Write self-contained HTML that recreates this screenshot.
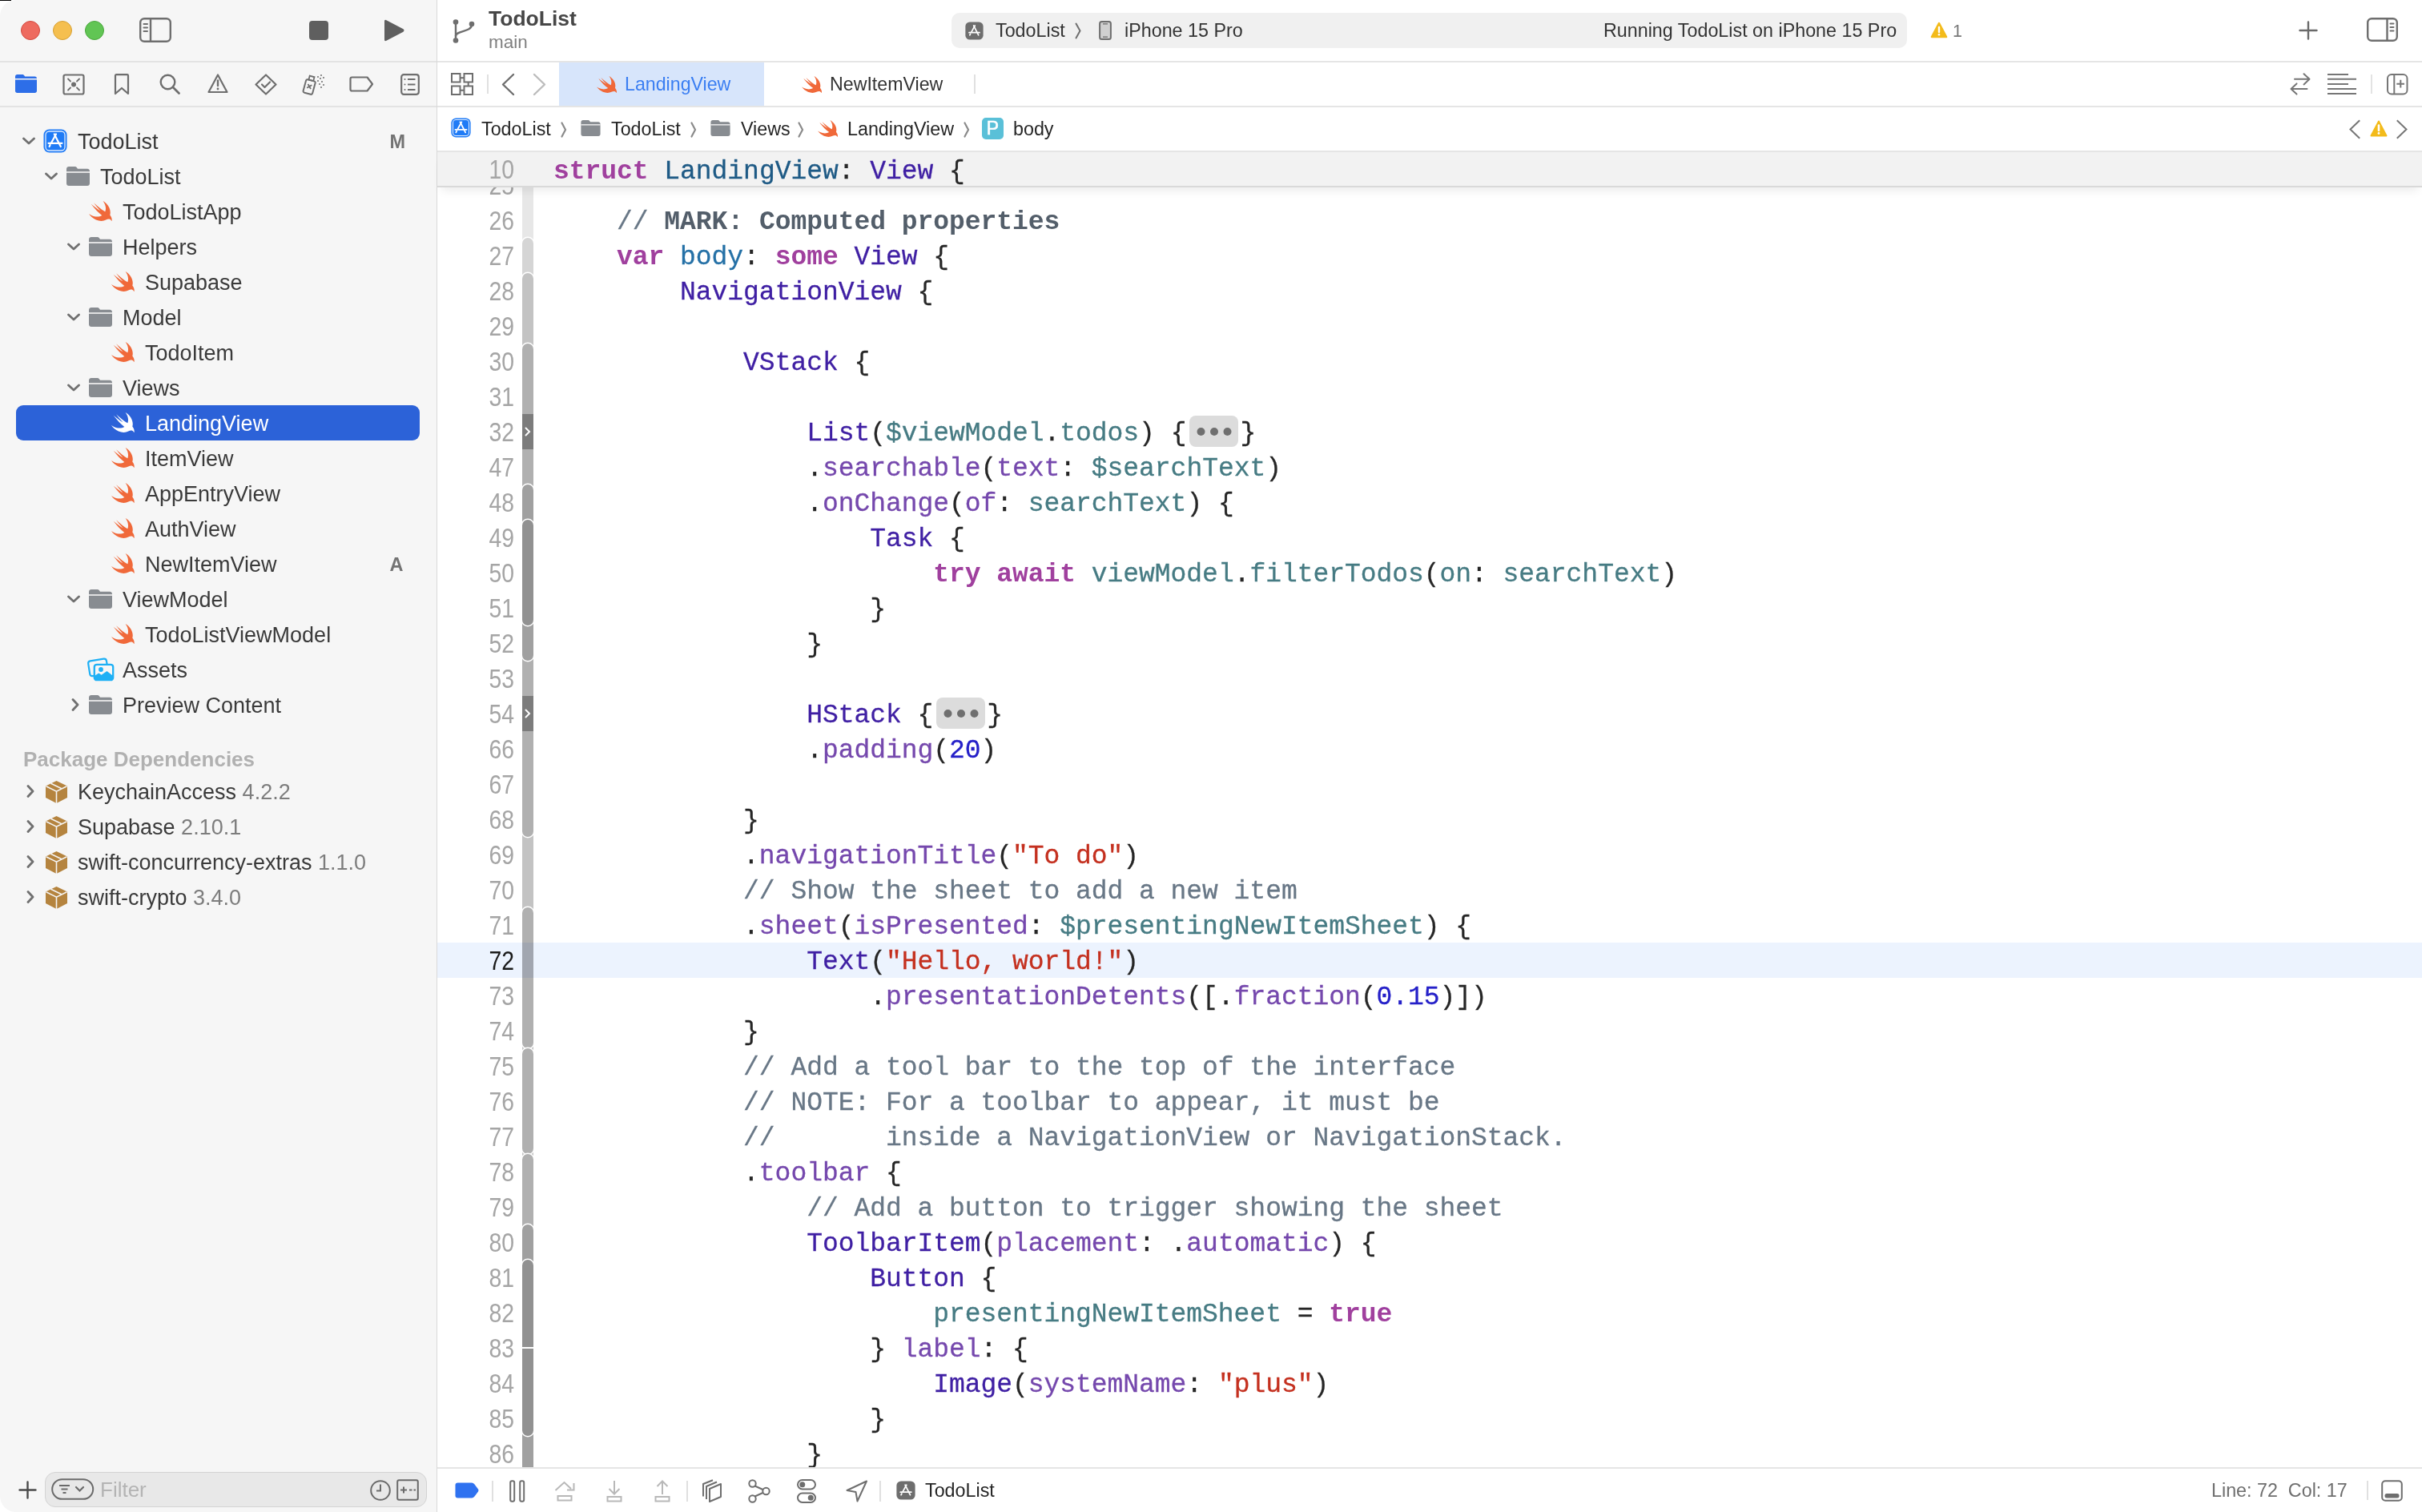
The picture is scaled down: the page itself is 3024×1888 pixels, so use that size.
<!DOCTYPE html><html><head><meta charset="utf-8"><style>
html,body{margin:0;padding:0;}
body{width:3024px;height:1888px;overflow:hidden;background:#fff;position:relative;font-family:"Liberation Sans", sans-serif;}
#w{position:absolute;left:0;top:0;width:3024px;height:1888px;will-change:transform;}
.a{position:absolute;}
.t{position:absolute;white-space:pre;font-family:"Liberation Sans", sans-serif;}
.side{position:absolute;left:0;top:0;width:545px;height:1888px;background:#f6f6f6;border-top-left-radius:20px;border-bottom-left-radius:20px;}
.row{position:absolute;white-space:pre;font-size:27px;line-height:44px;height:44px;color:#3a3a3a;}
.code{position:absolute;left:691px;white-space:pre;font-family:"Liberation Mono", monospace;font-size:33px;letter-spacing:-0.045px;line-height:44px;height:44px;margin-top:3px;color:#262626;-webkit-text-stroke:0.3px currentColor;}
.ln{position:absolute;left:542px;width:100px;text-align:right;font-family:"Liberation Sans", sans-serif;font-size:33px;line-height:44px;height:44px;margin-top:0.5px;color:#a5a5a5;transform:scaleX(0.86);transform-origin:100% 50%;}
.kw{color:#a0409e;font-weight:bold;-webkit-text-stroke:0;}
.td{color:#1e5a85;}
.dc{color:#2470a6;}
.st{color:#3f1fa3;}
.sf{color:#7548ad;}
.pj{color:#467b83;}
.str{color:#c4301f;}
.num{color:#2520c8;}
.cm{color:#687786;}
.mk{color:#535e6a;font-weight:bold;-webkit-text-stroke:0;}
.fold{display:inline-block;width:61px;height:39px;vertical-align:middle;background:#dcdcdc;border-radius:8px;position:relative;top:-3px;margin-left:4px;margin-right:2px;}
</style></head><body><div id="w"><div class="a" style="left:0;top:0;width:14px;height:1px;background:#000"></div><div class="side"><div class="a" style="left:26px;top:26px;width:22px;height:22px;border-radius:50%;background:#ee6a5f;border:1px solid #d3493f;"></div><div class="a" style="left:66px;top:26px;width:22px;height:22px;border-radius:50%;background:#f5bf4f;border:1px solid #d7a034;"></div><div class="a" style="left:106px;top:26px;width:22px;height:22px;border-radius:50%;background:#61c554;border:1px solid #4aa73d;"></div><svg class="a" style="left:174px;top:22px" width="40" height="31" viewBox="0 0 40 31"><rect x="1.2" y="1.2" width="37.6" height="28.6" rx="5" fill="none" stroke="#6e6e6e" stroke-width="2.4"/><path d="M14 1.5 V29.5" stroke="#6e6e6e" stroke-width="2.4"/><path d="M5.5 8 H10 M5.5 12.5 H10 M5.5 17 H10" stroke="#6e6e6e" stroke-width="2" stroke-linecap="round"/></svg><div class="a" style="left:386px;top:26px;width:24px;height:24px;border-radius:4px;background:#5f5f5f"></div><svg class="a" style="left:478px;top:23px" width="28" height="30" viewBox="0 0 28 30"><path d="M2 3.5 Q2 0.8 4.5 2.2 L25.5 13.3 Q27.5 15 25.5 16.7 L4.5 27.8 Q2 29.2 2 26.5 Z" fill="#5f5f5f"/></svg><div class="a" style="left:0;top:76px;width:545px;height:2px;background:#e3e3e3"></div><div class="a" style="left:0;top:132px;width:545px;height:2px;background:#e3e3e3"></div><svg class="a" style="left:19px;top:93px" width="27" height="23" viewBox="0 0 27 23"><path fill="#2d6ee8" d="M2.5 0h6.5c1 0 1.5.4 2.2 1.2l1 1.3H24.5c1.4 0 2.5 1.1 2.5 2.5V20.5c0 1.4-1.1 2.5-2.5 2.5h-22C1.1 23 0 21.9 0 20.5V2.5C0 1.1 1.1 0 2.5 0z"/><rect x="0" y="5" width="27" height="1.5" fill="#f6f6f6"/></svg><svg class="a" style="left:78px;top:92px" width="28" height="27" viewBox="0 0 28 27"><rect x="1.5" y="1.5" width="25" height="24" rx="2" fill="none" stroke="#6e6e6e" stroke-width="2.2"/><circle cx="14" cy="13.5" r="3" fill="#6e6e6e"/><path d="M7 6.5 L10 9.5 M21 6.5 L18 9.5 M7 20.5 L10 17.5 M21 20.5 L18 17.5" stroke="#6e6e6e" stroke-width="1.8" stroke-linecap="round"/></svg><svg class="a" style="left:142px;top:92px" width="20" height="27" viewBox="0 0 20 27"><path d="M2 2.5 Q2 1.2 3.3 1.2 H16.7 Q18 1.2 18 2.5 V25 L10 18 L2 25 Z" fill="none" stroke="#6e6e6e" stroke-width="2.2" stroke-linejoin="round"/></svg><svg class="a" style="left:199px;top:92px" width="27" height="27" viewBox="0 0 27 27"><circle cx="10.5" cy="10.5" r="8.8" fill="none" stroke="#6e6e6e" stroke-width="2.4"/><path d="M17 17 L24.5 24.5" stroke="#6e6e6e" stroke-width="2.8" stroke-linecap="round"/></svg><svg class="a" style="left:259px;top:92px" width="26" height="25" viewBox="0 0 26 25"><path d="M13 1.5 L24.5 23 H1.5 Z" fill="none" stroke="#6e6e6e" stroke-width="2.2" stroke-linejoin="round"/><path d="M13 8.5 V15" stroke="#6e6e6e" stroke-width="2.4" stroke-linecap="round"/><circle cx="13" cy="19" r="1.4" fill="#6e6e6e"/></svg><svg class="a" style="left:318px;top:92px" width="28" height="27" viewBox="0 0 28 27"><path d="M14 1.5 L26.5 13.5 L14 25.5 L1.5 13.5 Z" fill="none" stroke="#6e6e6e" stroke-width="2.2" stroke-linejoin="round"/><path d="M9 13.5 L12.5 17 L19 10.5" fill="none" stroke="#6e6e6e" stroke-width="2.2" stroke-linecap="round" stroke-linejoin="round"/></svg><svg class="a" style="left:377px;top:92px" width="31" height="27" viewBox="0 0 31 27"><g transform="rotate(15 9 17)"><rect x="3" y="8" width="12" height="17" rx="2" fill="none" stroke="#6e6e6e" stroke-width="2"/><rect x="6" y="3" width="6" height="5" fill="none" stroke="#6e6e6e" stroke-width="1.8"/><path d="M6.5 13.5 L11.5 18.5 M11.5 13.5 L6.5 18.5" stroke="#6e6e6e" stroke-width="1.8"/></g><g fill="#6e6e6e"><circle cx="20" cy="4" r="1"/><circle cx="24" cy="2" r="1"/><circle cx="23" cy="6" r="1"/><circle cx="27" cy="5" r="1"/><circle cx="20" cy="9" r="1"/><circle cx="25" cy="10" r="1"/><circle cx="22" cy="13" r="1"/><circle cx="27" cy="14" r="1"/><circle cx="24" cy="17" r="1"/></g></svg><svg class="a" style="left:436px;top:95px" width="31" height="20" viewBox="0 0 31 20"><path d="M3.5 1.5 H22.5 L29 10 L22.5 18.5 H3.5 Q1.5 18.5 1.5 16.5 V3.5 Q1.5 1.5 3.5 1.5 Z" fill="none" stroke="#6e6e6e" stroke-width="2.2" stroke-linejoin="round"/></svg><svg class="a" style="left:500px;top:92px" width="24" height="27" viewBox="0 0 24 27"><rect x="1.2" y="1.2" width="21.6" height="24.6" rx="3" fill="none" stroke="#6e6e6e" stroke-width="2.2"/><path d="M9 7 H18.5 M9 13.5 H18.5 M9 20 H18.5" stroke="#6e6e6e" stroke-width="2.2"/><circle cx="5.5" cy="7" r="1" fill="#6e6e6e"/><circle cx="5.5" cy="13.5" r="1" fill="#6e6e6e"/><circle cx="5.5" cy="20" r="1" fill="#6e6e6e"/></svg><svg style="position:absolute;left:28.0px;top:168.0px" width="16" height="16" viewBox="0 0 16 16"><path d="M1.5 5 L8 11 L14.5 5" fill="none" stroke="#707070" stroke-width="2.8" stroke-linecap="round" stroke-linejoin="round"/></svg><svg style="position:absolute;left:54px;top:161px" width="30" height="30" viewBox="0 0 30 30"><rect x="0.5" y="0.5" width="29" height="29" rx="7" fill="#1f7bf6"/><rect x="3" y="3" width="24" height="24" rx="4.5" fill="none" stroke="#fff" stroke-opacity="0.85" stroke-width="1.3"/><g stroke="#fff" stroke-width="2.2" stroke-linecap="round" fill="none"><path d="M16 6.5 L10.2 17"/><path d="M8.6 20 L7.6 22"/><path d="M13.8 6.5 L21.8 22"/><path d="M6.5 17.8 H23.5"/></g></svg><div class="row" style="left:97px;top:155px;color:#3a3a3a">TodoList</div><div class="row" style="left:486.5px;top:154.5px;font-weight:bold;font-size:23.5px;color:#737373">M</div><svg style="position:absolute;left:56.0px;top:212.0px" width="16" height="16" viewBox="0 0 16 16"><path d="M1.5 5 L8 11 L14.5 5" fill="none" stroke="#707070" stroke-width="2.8" stroke-linecap="round" stroke-linejoin="round"/></svg><svg style="position:absolute;left:83px;top:208px" width="29" height="24" viewBox="0 0 29 24"><path fill="#888c91" d="M3 0h7.5c1.2 0 1.8.5 2.6 1.5l.9 1.2H26c1.7 0 3 1.3 3 3V21c0 1.7-1.3 3-3 3H3c-1.7 0-3-1.3-3-3V3c0-1.7 1.3-3 3-3z"/><rect x="0" y="6.2" width="29" height="1.6" fill="#f5f5f5"/></svg><div class="row" style="left:125px;top:199px;color:#3a3a3a">TodoList</div><svg style="position:absolute;left:111px;top:250.7px" width="28.7" height="25" viewBox="2.41 3.41 18.12 16.21" preserveAspectRatio="none"><path fill="#f0693a" d="M13.543 3.41c4.114 2.47 6.545 7.162 5.549 11.131-.024.093-.05.181-.076.272l.002.001c2.062 2.538 1.5 5.258 1.236 4.745-1.072-2.086-3.066-1.568-4.088-1.043a6.803 6.803 0 0 1-.281.158l-.02.012-.002.002c-2.115 1.123-4.957 1.205-7.812-.022a12.568 12.568 0 0 1-5.64-4.838c.649.48 1.35.902 2.097 1.252 3.019 1.414 6.051 1.311 8.197-.002C9.651 12.73 7.101 9.67 5.146 7.191a10.628 10.628 0 0 1-1.005-1.384c2.34 2.142 6.038 4.83 7.365 5.576C8.69 8.408 6.208 4.743 6.324 4.86c4.436 4.47 8.528 6.996 8.528 6.996.154.085.27.154.36.213.085-.215.16-.437.224-.668.708-2.588-.09-5.548-1.893-7.992z"/></svg><div class="row" style="left:153px;top:243px;color:#3a3a3a">TodoListApp</div><svg style="position:absolute;left:84.0px;top:300.0px" width="16" height="16" viewBox="0 0 16 16"><path d="M1.5 5 L8 11 L14.5 5" fill="none" stroke="#707070" stroke-width="2.8" stroke-linecap="round" stroke-linejoin="round"/></svg><svg style="position:absolute;left:111px;top:296px" width="29" height="24" viewBox="0 0 29 24"><path fill="#888c91" d="M3 0h7.5c1.2 0 1.8.5 2.6 1.5l.9 1.2H26c1.7 0 3 1.3 3 3V21c0 1.7-1.3 3-3 3H3c-1.7 0-3-1.3-3-3V3c0-1.7 1.3-3 3-3z"/><rect x="0" y="6.2" width="29" height="1.6" fill="#f5f5f5"/></svg><div class="row" style="left:153px;top:287px;color:#3a3a3a">Helpers</div><svg style="position:absolute;left:139px;top:338.7px" width="28.7" height="25" viewBox="2.41 3.41 18.12 16.21" preserveAspectRatio="none"><path fill="#f0693a" d="M13.543 3.41c4.114 2.47 6.545 7.162 5.549 11.131-.024.093-.05.181-.076.272l.002.001c2.062 2.538 1.5 5.258 1.236 4.745-1.072-2.086-3.066-1.568-4.088-1.043a6.803 6.803 0 0 1-.281.158l-.02.012-.002.002c-2.115 1.123-4.957 1.205-7.812-.022a12.568 12.568 0 0 1-5.64-4.838c.649.48 1.35.902 2.097 1.252 3.019 1.414 6.051 1.311 8.197-.002C9.651 12.73 7.101 9.67 5.146 7.191a10.628 10.628 0 0 1-1.005-1.384c2.34 2.142 6.038 4.83 7.365 5.576C8.69 8.408 6.208 4.743 6.324 4.86c4.436 4.47 8.528 6.996 8.528 6.996.154.085.27.154.36.213.085-.215.16-.437.224-.668.708-2.588-.09-5.548-1.893-7.992z"/></svg><div class="row" style="left:181px;top:331px;color:#3a3a3a">Supabase</div><svg style="position:absolute;left:84.0px;top:388.0px" width="16" height="16" viewBox="0 0 16 16"><path d="M1.5 5 L8 11 L14.5 5" fill="none" stroke="#707070" stroke-width="2.8" stroke-linecap="round" stroke-linejoin="round"/></svg><svg style="position:absolute;left:111px;top:384px" width="29" height="24" viewBox="0 0 29 24"><path fill="#888c91" d="M3 0h7.5c1.2 0 1.8.5 2.6 1.5l.9 1.2H26c1.7 0 3 1.3 3 3V21c0 1.7-1.3 3-3 3H3c-1.7 0-3-1.3-3-3V3c0-1.7 1.3-3 3-3z"/><rect x="0" y="6.2" width="29" height="1.6" fill="#f5f5f5"/></svg><div class="row" style="left:153px;top:375px;color:#3a3a3a">Model</div><svg style="position:absolute;left:139px;top:426.7px" width="28.7" height="25" viewBox="2.41 3.41 18.12 16.21" preserveAspectRatio="none"><path fill="#f0693a" d="M13.543 3.41c4.114 2.47 6.545 7.162 5.549 11.131-.024.093-.05.181-.076.272l.002.001c2.062 2.538 1.5 5.258 1.236 4.745-1.072-2.086-3.066-1.568-4.088-1.043a6.803 6.803 0 0 1-.281.158l-.02.012-.002.002c-2.115 1.123-4.957 1.205-7.812-.022a12.568 12.568 0 0 1-5.64-4.838c.649.48 1.35.902 2.097 1.252 3.019 1.414 6.051 1.311 8.197-.002C9.651 12.73 7.101 9.67 5.146 7.191a10.628 10.628 0 0 1-1.005-1.384c2.34 2.142 6.038 4.83 7.365 5.576C8.69 8.408 6.208 4.743 6.324 4.86c4.436 4.47 8.528 6.996 8.528 6.996.154.085.27.154.36.213.085-.215.16-.437.224-.668.708-2.588-.09-5.548-1.893-7.992z"/></svg><div class="row" style="left:181px;top:419px;color:#3a3a3a">TodoItem</div><svg style="position:absolute;left:84.0px;top:476.0px" width="16" height="16" viewBox="0 0 16 16"><path d="M1.5 5 L8 11 L14.5 5" fill="none" stroke="#707070" stroke-width="2.8" stroke-linecap="round" stroke-linejoin="round"/></svg><svg style="position:absolute;left:111px;top:472px" width="29" height="24" viewBox="0 0 29 24"><path fill="#888c91" d="M3 0h7.5c1.2 0 1.8.5 2.6 1.5l.9 1.2H26c1.7 0 3 1.3 3 3V21c0 1.7-1.3 3-3 3H3c-1.7 0-3-1.3-3-3V3c0-1.7 1.3-3 3-3z"/><rect x="0" y="6.2" width="29" height="1.6" fill="#f5f5f5"/></svg><div class="row" style="left:153px;top:463px;color:#3a3a3a">Views</div><div class="a" style="left:20px;top:506px;width:504px;height:44px;border-radius:9px;background:#2c62d8"></div><svg style="position:absolute;left:139px;top:514.7px" width="28.7" height="25" viewBox="2.41 3.41 18.12 16.21" preserveAspectRatio="none"><path fill="#ffffff" d="M13.543 3.41c4.114 2.47 6.545 7.162 5.549 11.131-.024.093-.05.181-.076.272l.002.001c2.062 2.538 1.5 5.258 1.236 4.745-1.072-2.086-3.066-1.568-4.088-1.043a6.803 6.803 0 0 1-.281.158l-.02.012-.002.002c-2.115 1.123-4.957 1.205-7.812-.022a12.568 12.568 0 0 1-5.64-4.838c.649.48 1.35.902 2.097 1.252 3.019 1.414 6.051 1.311 8.197-.002C9.651 12.73 7.101 9.67 5.146 7.191a10.628 10.628 0 0 1-1.005-1.384c2.34 2.142 6.038 4.83 7.365 5.576C8.69 8.408 6.208 4.743 6.324 4.86c4.436 4.47 8.528 6.996 8.528 6.996.154.085.27.154.36.213.085-.215.16-.437.224-.668.708-2.588-.09-5.548-1.893-7.992z"/></svg><div class="row" style="left:181px;top:507px;color:#ffffff">LandingView</div><svg style="position:absolute;left:139px;top:558.7px" width="28.7" height="25" viewBox="2.41 3.41 18.12 16.21" preserveAspectRatio="none"><path fill="#f0693a" d="M13.543 3.41c4.114 2.47 6.545 7.162 5.549 11.131-.024.093-.05.181-.076.272l.002.001c2.062 2.538 1.5 5.258 1.236 4.745-1.072-2.086-3.066-1.568-4.088-1.043a6.803 6.803 0 0 1-.281.158l-.02.012-.002.002c-2.115 1.123-4.957 1.205-7.812-.022a12.568 12.568 0 0 1-5.64-4.838c.649.48 1.35.902 2.097 1.252 3.019 1.414 6.051 1.311 8.197-.002C9.651 12.73 7.101 9.67 5.146 7.191a10.628 10.628 0 0 1-1.005-1.384c2.34 2.142 6.038 4.83 7.365 5.576C8.69 8.408 6.208 4.743 6.324 4.86c4.436 4.47 8.528 6.996 8.528 6.996.154.085.27.154.36.213.085-.215.16-.437.224-.668.708-2.588-.09-5.548-1.893-7.992z"/></svg><div class="row" style="left:181px;top:551px;color:#3a3a3a">ItemView</div><svg style="position:absolute;left:139px;top:602.7px" width="28.7" height="25" viewBox="2.41 3.41 18.12 16.21" preserveAspectRatio="none"><path fill="#f0693a" d="M13.543 3.41c4.114 2.47 6.545 7.162 5.549 11.131-.024.093-.05.181-.076.272l.002.001c2.062 2.538 1.5 5.258 1.236 4.745-1.072-2.086-3.066-1.568-4.088-1.043a6.803 6.803 0 0 1-.281.158l-.02.012-.002.002c-2.115 1.123-4.957 1.205-7.812-.022a12.568 12.568 0 0 1-5.64-4.838c.649.48 1.35.902 2.097 1.252 3.019 1.414 6.051 1.311 8.197-.002C9.651 12.73 7.101 9.67 5.146 7.191a10.628 10.628 0 0 1-1.005-1.384c2.34 2.142 6.038 4.83 7.365 5.576C8.69 8.408 6.208 4.743 6.324 4.86c4.436 4.47 8.528 6.996 8.528 6.996.154.085.27.154.36.213.085-.215.16-.437.224-.668.708-2.588-.09-5.548-1.893-7.992z"/></svg><div class="row" style="left:181px;top:595px;color:#3a3a3a">AppEntryView</div><svg style="position:absolute;left:139px;top:646.7px" width="28.7" height="25" viewBox="2.41 3.41 18.12 16.21" preserveAspectRatio="none"><path fill="#f0693a" d="M13.543 3.41c4.114 2.47 6.545 7.162 5.549 11.131-.024.093-.05.181-.076.272l.002.001c2.062 2.538 1.5 5.258 1.236 4.745-1.072-2.086-3.066-1.568-4.088-1.043a6.803 6.803 0 0 1-.281.158l-.02.012-.002.002c-2.115 1.123-4.957 1.205-7.812-.022a12.568 12.568 0 0 1-5.64-4.838c.649.48 1.35.902 2.097 1.252 3.019 1.414 6.051 1.311 8.197-.002C9.651 12.73 7.101 9.67 5.146 7.191a10.628 10.628 0 0 1-1.005-1.384c2.34 2.142 6.038 4.83 7.365 5.576C8.69 8.408 6.208 4.743 6.324 4.86c4.436 4.47 8.528 6.996 8.528 6.996.154.085.27.154.36.213.085-.215.16-.437.224-.668.708-2.588-.09-5.548-1.893-7.992z"/></svg><div class="row" style="left:181px;top:639px;color:#3a3a3a">AuthView</div><svg style="position:absolute;left:139px;top:690.7px" width="28.7" height="25" viewBox="2.41 3.41 18.12 16.21" preserveAspectRatio="none"><path fill="#f0693a" d="M13.543 3.41c4.114 2.47 6.545 7.162 5.549 11.131-.024.093-.05.181-.076.272l.002.001c2.062 2.538 1.5 5.258 1.236 4.745-1.072-2.086-3.066-1.568-4.088-1.043a6.803 6.803 0 0 1-.281.158l-.02.012-.002.002c-2.115 1.123-4.957 1.205-7.812-.022a12.568 12.568 0 0 1-5.64-4.838c.649.48 1.35.902 2.097 1.252 3.019 1.414 6.051 1.311 8.197-.002C9.651 12.73 7.101 9.67 5.146 7.191a10.628 10.628 0 0 1-1.005-1.384c2.34 2.142 6.038 4.83 7.365 5.576C8.69 8.408 6.208 4.743 6.324 4.86c4.436 4.47 8.528 6.996 8.528 6.996.154.085.27.154.36.213.085-.215.16-.437.224-.668.708-2.588-.09-5.548-1.893-7.992z"/></svg><div class="row" style="left:181px;top:683px;color:#3a3a3a">NewItemView</div><div class="row" style="left:486.5px;top:682.5px;font-weight:bold;font-size:23.5px;color:#737373">A</div><svg style="position:absolute;left:84.0px;top:740.0px" width="16" height="16" viewBox="0 0 16 16"><path d="M1.5 5 L8 11 L14.5 5" fill="none" stroke="#707070" stroke-width="2.8" stroke-linecap="round" stroke-linejoin="round"/></svg><svg style="position:absolute;left:111px;top:736px" width="29" height="24" viewBox="0 0 29 24"><path fill="#888c91" d="M3 0h7.5c1.2 0 1.8.5 2.6 1.5l.9 1.2H26c1.7 0 3 1.3 3 3V21c0 1.7-1.3 3-3 3H3c-1.7 0-3-1.3-3-3V3c0-1.7 1.3-3 3-3z"/><rect x="0" y="6.2" width="29" height="1.6" fill="#f5f5f5"/></svg><div class="row" style="left:153px;top:727px;color:#3a3a3a">ViewModel</div><svg style="position:absolute;left:139px;top:778.7px" width="28.7" height="25" viewBox="2.41 3.41 18.12 16.21" preserveAspectRatio="none"><path fill="#f0693a" d="M13.543 3.41c4.114 2.47 6.545 7.162 5.549 11.131-.024.093-.05.181-.076.272l.002.001c2.062 2.538 1.5 5.258 1.236 4.745-1.072-2.086-3.066-1.568-4.088-1.043a6.803 6.803 0 0 1-.281.158l-.02.012-.002.002c-2.115 1.123-4.957 1.205-7.812-.022a12.568 12.568 0 0 1-5.64-4.838c.649.48 1.35.902 2.097 1.252 3.019 1.414 6.051 1.311 8.197-.002C9.651 12.73 7.101 9.67 5.146 7.191a10.628 10.628 0 0 1-1.005-1.384c2.34 2.142 6.038 4.83 7.365 5.576C8.69 8.408 6.208 4.743 6.324 4.86c4.436 4.47 8.528 6.996 8.528 6.996.154.085.27.154.36.213.085-.215.16-.437.224-.668.708-2.588-.09-5.548-1.893-7.992z"/></svg><div class="row" style="left:181px;top:771px;color:#3a3a3a">TodoListViewModel</div><svg style="position:absolute;left:108px;top:820px" width="36" height="32" viewBox="0 0 36 32"><g transform="rotate(-9 14 13)"><rect x="3" y="4" width="23" height="19" rx="3" fill="none" stroke="#1eb0f5" stroke-width="2.2"/></g><rect x="9.8" y="9.8" width="23.4" height="19.4" rx="3" fill="#f6f6f6" stroke="#1eb0f5" stroke-width="2.3"/><circle cx="18" cy="16" r="2.9" fill="#1eb0f5"/><path d="M9.8 24 L15.3 20.5 L18.6 22.8 L25.5 18 L33.2 24 V26.5 Q33.2 29.2 30.5 29.2 H12.5 Q9.8 29.2 9.8 26.5 Z" fill="#1eb0f5"/></svg><div class="row" style="left:153px;top:815px;color:#3a3a3a">Assets</div><svg style="position:absolute;left:86.0px;top:872.0px" width="16" height="16" viewBox="0 0 16 16"><path d="M5 1.5 L11 8 L5 14.5" fill="none" stroke="#707070" stroke-width="2.8" stroke-linecap="round" stroke-linejoin="round"/></svg><svg style="position:absolute;left:111px;top:868px" width="29" height="24" viewBox="0 0 29 24"><path fill="#888c91" d="M3 0h7.5c1.2 0 1.8.5 2.6 1.5l.9 1.2H26c1.7 0 3 1.3 3 3V21c0 1.7-1.3 3-3 3H3c-1.7 0-3-1.3-3-3V3c0-1.7 1.3-3 3-3z"/><rect x="0" y="6.2" width="29" height="1.6" fill="#f5f5f5"/></svg><div class="row" style="left:153px;top:859px;color:#3a3a3a">Preview Content</div><div class="row" style="left:29px;top:926px;font-weight:bold;font-size:26px;color:#b1b1b1">Package Dependencies</div><svg style="position:absolute;left:30.0px;top:979.5px" width="16" height="16" viewBox="0 0 16 16"><path d="M5 1.5 L11 8 L5 14.5" fill="none" stroke="#707070" stroke-width="2.8" stroke-linecap="round" stroke-linejoin="round"/></svg><svg style="position:absolute;left:57px;top:975px" width="27" height="28" viewBox="0 0 27 28"><path fill="#b5843f" d="M13.5 0 L27 6.5 V21 L13.5 28 L0 21 V6.5 Z"/><path fill="none" stroke="#f5f5f5" stroke-width="1.6" d="M0.5 6.8 L13.5 13.2 L26.5 6.8 M13.5 13.2 V28"/><path fill="none" stroke="#f5f5f5" stroke-width="1.6" d="M6.5 3.3 L20 9.8"/></svg><div class="row" style="left:97px;top:967px">KeychainAccess <span style="color:#7d7d7d">4.2.2</span></div><svg style="position:absolute;left:30.0px;top:1023.5px" width="16" height="16" viewBox="0 0 16 16"><path d="M5 1.5 L11 8 L5 14.5" fill="none" stroke="#707070" stroke-width="2.8" stroke-linecap="round" stroke-linejoin="round"/></svg><svg style="position:absolute;left:57px;top:1019px" width="27" height="28" viewBox="0 0 27 28"><path fill="#b5843f" d="M13.5 0 L27 6.5 V21 L13.5 28 L0 21 V6.5 Z"/><path fill="none" stroke="#f5f5f5" stroke-width="1.6" d="M0.5 6.8 L13.5 13.2 L26.5 6.8 M13.5 13.2 V28"/><path fill="none" stroke="#f5f5f5" stroke-width="1.6" d="M6.5 3.3 L20 9.8"/></svg><div class="row" style="left:97px;top:1011px">Supabase <span style="color:#7d7d7d">2.10.1</span></div><svg style="position:absolute;left:30.0px;top:1067.5px" width="16" height="16" viewBox="0 0 16 16"><path d="M5 1.5 L11 8 L5 14.5" fill="none" stroke="#707070" stroke-width="2.8" stroke-linecap="round" stroke-linejoin="round"/></svg><svg style="position:absolute;left:57px;top:1063px" width="27" height="28" viewBox="0 0 27 28"><path fill="#b5843f" d="M13.5 0 L27 6.5 V21 L13.5 28 L0 21 V6.5 Z"/><path fill="none" stroke="#f5f5f5" stroke-width="1.6" d="M0.5 6.8 L13.5 13.2 L26.5 6.8 M13.5 13.2 V28"/><path fill="none" stroke="#f5f5f5" stroke-width="1.6" d="M6.5 3.3 L20 9.8"/></svg><div class="row" style="left:97px;top:1055px">swift-concurrency-extras <span style="color:#7d7d7d">1.1.0</span></div><svg style="position:absolute;left:30.0px;top:1111.5px" width="16" height="16" viewBox="0 0 16 16"><path d="M5 1.5 L11 8 L5 14.5" fill="none" stroke="#707070" stroke-width="2.8" stroke-linecap="round" stroke-linejoin="round"/></svg><svg style="position:absolute;left:57px;top:1107px" width="27" height="28" viewBox="0 0 27 28"><path fill="#b5843f" d="M13.5 0 L27 6.5 V21 L13.5 28 L0 21 V6.5 Z"/><path fill="none" stroke="#f5f5f5" stroke-width="1.6" d="M0.5 6.8 L13.5 13.2 L26.5 6.8 M13.5 13.2 V28"/><path fill="none" stroke="#f5f5f5" stroke-width="1.6" d="M6.5 3.3 L20 9.8"/></svg><div class="row" style="left:97px;top:1099px">swift-crypto <span style="color:#7d7d7d">3.4.0</span></div><svg class="a" style="left:23px;top:1849px" width="23" height="23" viewBox="0 0 23 23"><path d="M11.5 1.5 V21.5 M1.5 11.5 H21.5" stroke="#4a4a4a" stroke-width="2.4" stroke-linecap="round"/></svg><div class="a" style="left:56px;top:1838px;width:477px;height:44px;border-radius:13px;background:#e8e8e8;border:1px solid #d3d3d3;box-sizing:border-box"></div><svg class="a" style="left:64px;top:1846px" width="54" height="27" viewBox="0 0 54 27"><rect x="1.2" y="1.2" width="51" height="24.6" rx="12.3" fill="none" stroke="#6a6a6a" stroke-width="2"/><path d="M10 9 H23 M12.5 13.5 H20.5 M14.5 18 H18.5" stroke="#6a6a6a" stroke-width="2"/><path d="M31 11 L35.5 15.5 L40 11" fill="none" stroke="#6a6a6a" stroke-width="2.2" stroke-linecap="round"/></svg><div class="row" style="left:125px;top:1838px;line-height:44px;font-size:26px;color:#b4b4b4">Filter</div><svg class="a" style="left:461px;top:1847px" width="28" height="28" viewBox="0 0 28 28"><circle cx="14" cy="14" r="11.8" fill="none" stroke="#6a6a6a" stroke-width="2"/><path d="M14 6.5 V14.5 H9" fill="none" stroke="#6a6a6a" stroke-width="2"/></svg><svg class="a" style="left:495px;top:1847px" width="28" height="27" viewBox="0 0 28 27"><rect x="1.2" y="1.2" width="25.6" height="24.6" rx="2" fill="none" stroke="#6a6a6a" stroke-width="2"/><path d="M5 13.5 H13 M9 9.5 V17.5 M16 13.5 H19.5 M21.5 13.5 H24" stroke="#6a6a6a" stroke-width="2"/></svg></div><div class="a" style="left:545px;top:0;width:1px;height:1888px;background:#d9d9d9"></div><svg class="a" style="left:564px;top:23px" width="30" height="32" viewBox="0 0 30 32"><g fill="none" stroke="#6e6e6e" stroke-width="2.4" stroke-linecap="round"><path d="M5 5 V27"/><path d="M5 22 C5 15 25 17 25 8"/></g><circle cx="5" cy="4.5" r="3.3" fill="#6e6e6e"/><circle cx="5" cy="27.5" r="3.3" fill="#6e6e6e"/><circle cx="25" cy="7" r="3.3" fill="#6e6e6e"/></svg><div class="t" style="left:610px;top:5px;font-size:26.5px;line-height:36px;font-weight:bold;color:#474747">TodoList</div><div class="t" style="left:610px;top:37.5px;font-size:22.5px;line-height:30px;color:#7f7f7f">main</div><div class="a" style="left:1188px;top:16px;width:1193px;height:44px;border-radius:10px;background:#f0f0f0"></div><svg style="position:absolute;left:1205px;top:27px" width="23" height="23" viewBox="0 0 30 30"><rect x="0.5" y="0.5" width="29" height="29" rx="7" fill="#6e6e6e"/><g stroke="#fff" stroke-width="2.2" stroke-linecap="round" fill="none"><path d="M16 6.5 L10.2 17"/><path d="M8.6 20 L7.6 22"/><path d="M13.8 6.5 L21.8 22"/><path d="M6.5 17.8 H23.5"/></g></svg><div class="t" style="left:1243px;top:22px;font-size:23.3px;line-height:32px;color:#333">TodoList</div><svg class="a" style="left:1341px;top:28px" width="10" height="21" viewBox="0 0 10 21"><path d="M2.5 1.5 L7.5 10.5 L2.5 19.5" fill="none" stroke="#6e6e6e" stroke-width="2" stroke-linecap="round"/></svg><svg class="a" style="left:1372px;top:26px" width="16" height="24" viewBox="0 0 16 24"><rect x="1.1" y="1.1" width="13.8" height="21.8" rx="2.5" fill="#d0d0d0" stroke="#6e6e6e" stroke-width="2"/><rect x="5" y="3.2" width="6" height="1.3" fill="#6e6e6e"/><rect x="5" y="19.5" width="6" height="1.3" fill="#6e6e6e"/></svg><div class="t" style="left:1404px;top:22px;font-size:23.3px;line-height:32px;color:#333">iPhone 15 Pro</div><div class="t" style="left:2002px;top:22px;font-size:23.3px;line-height:32px;color:#333">Running TodoList on iPhone 15 Pro</div><svg class="a" style="left:2409.5px;top:27px" width="22" height="21" viewBox="0 0 22 21"><path d="M11 2.2 L20 19 H2 Z" fill="#f3bb1b" stroke="#f3bb1b" stroke-width="2.6" stroke-linejoin="round"/><path d="M11 7 L11 13" stroke="#fff" stroke-width="2.4" stroke-linecap="round"/><circle cx="11" cy="16.3" r="1.3" fill="#fff"/></svg><div class="t" style="left:2438px;top:23px;font-size:21.5px;line-height:32px;color:#787878">1</div><svg class="a" style="left:2870px;top:26px" width="24" height="24" viewBox="0 0 24 24"><path d="M12 1.5 V22.5 M1.5 12 H22.5" stroke="#6a6a6a" stroke-width="2.4" stroke-linecap="round"/></svg><svg class="a" style="left:2955px;top:22px" width="39" height="30" viewBox="0 0 39 30"><rect x="1.2" y="1.2" width="36.6" height="27.6" rx="5" fill="none" stroke="#6e6e6e" stroke-width="2.4"/><path d="M25.5 1.5 V28.5" stroke="#6e6e6e" stroke-width="2.4"/><path d="M29.5 7.5 H33.5 M29.5 12 H33.5 M29.5 16.5 H33.5" stroke="#6e6e6e" stroke-width="2" stroke-linecap="round"/></svg><div class="a" style="left:546px;top:76px;width:2478px;height:2px;background:#e5e5e5"></div><svg class="a" style="left:563px;top:91px" width="28" height="28" viewBox="0 0 28 28"><g fill="none" stroke="#6e6e6e" stroke-width="2"><rect x="1" y="1" width="10.5" height="10.5"/><rect x="16.5" y="1" width="10.5" height="10.5"/><rect x="1" y="16.5" width="10.5" height="10.5"/><rect x="16.5" y="16.5" width="10.5" height="10.5"/><path d="M11.5 6.2 H16.5 M21.7 11.5 V16.5 M11.5 21.7 H16.5"/></g></svg><div class="a" style="left:608px;top:93px;width:2px;height:24px;background:#e0e0e0"></div><svg class="a" style="left:624px;top:91px" width="20" height="29" viewBox="0 0 20 29"><path d="M17 2 L4 14.5 L17 27" fill="none" stroke="#6e6e6e" stroke-width="2.4" stroke-linecap="round" stroke-linejoin="round"/></svg><svg class="a" style="left:664px;top:91px" width="20" height="29" viewBox="0 0 20 29"><path d="M3 2 L16 14.5 L3 27" fill="none" stroke="#bcbcbc" stroke-width="2.4" stroke-linecap="round" stroke-linejoin="round"/></svg><div class="a" style="left:698px;top:78px;width:256px;height:54px;background:#d7e5fb"></div><svg style="position:absolute;left:745px;top:94.5px" width="25" height="21" viewBox="2.41 3.41 18.12 16.21" preserveAspectRatio="none"><path fill="#f0693a" d="M13.543 3.41c4.114 2.47 6.545 7.162 5.549 11.131-.024.093-.05.181-.076.272l.002.001c2.062 2.538 1.5 5.258 1.236 4.745-1.072-2.086-3.066-1.568-4.088-1.043a6.803 6.803 0 0 1-.281.158l-.02.012-.002.002c-2.115 1.123-4.957 1.205-7.812-.022a12.568 12.568 0 0 1-5.64-4.838c.649.48 1.35.902 2.097 1.252 3.019 1.414 6.051 1.311 8.197-.002C9.651 12.73 7.101 9.67 5.146 7.191a10.628 10.628 0 0 1-1.005-1.384c2.34 2.142 6.038 4.83 7.365 5.576C8.69 8.408 6.208 4.743 6.324 4.86c4.436 4.47 8.528 6.996 8.528 6.996.154.085.27.154.36.213.085-.215.16-.437.224-.668.708-2.588-.09-5.548-1.893-7.992z"/></svg><div class="t" style="left:780px;top:89px;font-size:23.2px;line-height:32px;color:#3a7ef2">LandingView</div><svg style="position:absolute;left:1001px;top:94.5px" width="25" height="21" viewBox="2.41 3.41 18.12 16.21" preserveAspectRatio="none"><path fill="#f0693a" d="M13.543 3.41c4.114 2.47 6.545 7.162 5.549 11.131-.024.093-.05.181-.076.272l.002.001c2.062 2.538 1.5 5.258 1.236 4.745-1.072-2.086-3.066-1.568-4.088-1.043a6.803 6.803 0 0 1-.281.158l-.02.012-.002.002c-2.115 1.123-4.957 1.205-7.812-.022a12.568 12.568 0 0 1-5.64-4.838c.649.48 1.35.902 2.097 1.252 3.019 1.414 6.051 1.311 8.197-.002C9.651 12.73 7.101 9.67 5.146 7.191a10.628 10.628 0 0 1-1.005-1.384c2.34 2.142 6.038 4.83 7.365 5.576C8.69 8.408 6.208 4.743 6.324 4.86c4.436 4.47 8.528 6.996 8.528 6.996.154.085.27.154.36.213.085-.215.16-.437.224-.668.708-2.588-.09-5.548-1.893-7.992z"/></svg><div class="t" style="left:1036px;top:89px;font-size:23.2px;line-height:32px;color:#333">NewItemView</div><div class="a" style="left:1216px;top:93px;width:2px;height:24px;background:#e0e0e0"></div><svg class="a" style="left:2856px;top:88px" width="34" height="32" viewBox="0 0 34 32"><g fill="none" stroke="#767676" stroke-width="2" stroke-linecap="round" stroke-linejoin="round"><path d="M9 10.8 H27 M20.5 4.2 L27.5 10.8 L20.5 17.4"/><path d="M24.5 23 H5 M11.5 16.4 L4.5 23 L11.5 29.6"/></g></svg><svg class="a" style="left:2906px;top:91px" width="37" height="28" viewBox="0 0 37 28"><g stroke="#767676" stroke-width="2"><path d="M0 1.9 H26 M0 7.8 H36 M0 13.9 H26 M0 20 H36 M0 26 H36"/></g></svg><div class="a" style="left:2960px;top:93px;width:2px;height:24px;background:#e3e3e3"></div><svg class="a" style="left:2980px;top:91.5px" width="27" height="27" viewBox="0 0 27 27"><rect x="1" y="1" width="24.5" height="24.5" rx="5" fill="none" stroke="#767676" stroke-width="2"/><path d="M9.3 1.5 V25.5" stroke="#767676" stroke-width="2"/><path d="M17.3 7.8 V17.5 M12.3 12.7 H22" stroke="#767676" stroke-width="2"/></svg><div class="a" style="left:546px;top:132px;width:2478px;height:2px;background:#e5e5e5"></div><svg style="position:absolute;left:563px;top:147px" width="25" height="25" viewBox="0 0 30 30"><rect x="0.5" y="0.5" width="29" height="29" rx="7" fill="#1f7bf6"/><rect x="3" y="3" width="24" height="24" rx="4.5" fill="none" stroke="#fff" stroke-opacity="0.85" stroke-width="1.3"/><g stroke="#fff" stroke-width="2.2" stroke-linecap="round" fill="none"><path d="M16 6.5 L10.2 17"/><path d="M8.6 20 L7.6 22"/><path d="M13.8 6.5 L21.8 22"/><path d="M6.5 17.8 H23.5"/></g></svg><div class="t" style="left:601px;top:145px;font-size:23.3px;line-height:32px;color:#262626">TodoList</div><svg class="a" style="left:699px;top:151.5px" width="10" height="20" viewBox="0 0 10 20"><path d="M2.5 1.5 L7 10 L2.5 18.5" fill="none" stroke="#8a8a8a" stroke-width="2.2" stroke-linecap="round"/></svg><svg style="position:absolute;left:725px;top:150px" width="25" height="20" viewBox="0 0 29 24"><path fill="#888c91" d="M3 0h7.5c1.2 0 1.8.5 2.6 1.5l.9 1.2H26c1.7 0 3 1.3 3 3V21c0 1.7-1.3 3-3 3H3c-1.7 0-3-1.3-3-3V3c0-1.7 1.3-3 3-3z"/><rect x="0" y="6.2" width="29" height="1.6" fill="#f5f5f5"/></svg><div class="t" style="left:763px;top:145px;font-size:23.3px;line-height:32px;color:#262626">TodoList</div><svg class="a" style="left:861px;top:151.5px" width="10" height="20" viewBox="0 0 10 20"><path d="M2.5 1.5 L7 10 L2.5 18.5" fill="none" stroke="#8a8a8a" stroke-width="2.2" stroke-linecap="round"/></svg><svg style="position:absolute;left:887px;top:150px" width="25" height="20" viewBox="0 0 29 24"><path fill="#888c91" d="M3 0h7.5c1.2 0 1.8.5 2.6 1.5l.9 1.2H26c1.7 0 3 1.3 3 3V21c0 1.7-1.3 3-3 3H3c-1.7 0-3-1.3-3-3V3c0-1.7 1.3-3 3-3z"/><rect x="0" y="6.2" width="29" height="1.6" fill="#f5f5f5"/></svg><div class="t" style="left:925px;top:145px;font-size:23.3px;line-height:32px;color:#262626">Views</div><svg class="a" style="left:995px;top:151.5px" width="10" height="20" viewBox="0 0 10 20"><path d="M2.5 1.5 L7 10 L2.5 18.5" fill="none" stroke="#8a8a8a" stroke-width="2.2" stroke-linecap="round"/></svg><svg style="position:absolute;left:1021px;top:150px" width="25" height="21" viewBox="2.41 3.41 18.12 16.21" preserveAspectRatio="none"><path fill="#f0693a" d="M13.543 3.41c4.114 2.47 6.545 7.162 5.549 11.131-.024.093-.05.181-.076.272l.002.001c2.062 2.538 1.5 5.258 1.236 4.745-1.072-2.086-3.066-1.568-4.088-1.043a6.803 6.803 0 0 1-.281.158l-.02.012-.002.002c-2.115 1.123-4.957 1.205-7.812-.022a12.568 12.568 0 0 1-5.64-4.838c.649.48 1.35.902 2.097 1.252 3.019 1.414 6.051 1.311 8.197-.002C9.651 12.73 7.101 9.67 5.146 7.191a10.628 10.628 0 0 1-1.005-1.384c2.34 2.142 6.038 4.83 7.365 5.576C8.69 8.408 6.208 4.743 6.324 4.86c4.436 4.47 8.528 6.996 8.528 6.996.154.085.27.154.36.213.085-.215.16-.437.224-.668.708-2.588-.09-5.548-1.893-7.992z"/></svg><div class="t" style="left:1058px;top:145px;font-size:23.3px;line-height:32px;color:#262626">LandingView</div><svg class="a" style="left:1202px;top:151.5px" width="10" height="20" viewBox="0 0 10 20"><path d="M2.5 1.5 L7 10 L2.5 18.5" fill="none" stroke="#8a8a8a" stroke-width="2.2" stroke-linecap="round"/></svg><div class="a" style="left:1226px;top:147px;width:27px;height:27px;border-radius:5px;background:#5ac0d8;color:#fff;font-size:23px;line-height:27px;text-align:center;-webkit-text-stroke:0.6px #fff">P</div><div class="t" style="left:1265px;top:145px;font-size:23.3px;line-height:32px;color:#262626">body</div><svg class="a" style="left:2932px;top:149px" width="16" height="25" viewBox="0 0 16 25"><path d="M13.5 2 L2.5 12.5 L13.5 23" fill="none" stroke="#767676" stroke-width="2" stroke-linecap="square"/></svg><svg class="a" style="left:2959px;top:150px" width="22" height="21" viewBox="0 0 22 21"><path d="M11 1.5 L20.5 19.5 H1.5 Z" fill="#f3bb1b" stroke="#f3bb1b" stroke-width="2" stroke-linejoin="round"/><path d="M11 6.5 L11 13" stroke="#fff" stroke-width="2.6" stroke-linecap="round"/><circle cx="11" cy="16.5" r="1.4" fill="#fff"/></svg><svg class="a" style="left:2991px;top:149px" width="16" height="25" viewBox="0 0 16 25"><path d="M2.5 2 L13.5 12.5 L2.5 23" fill="none" stroke="#767676" stroke-width="2" stroke-linecap="square"/></svg><div class="a" style="left:546px;top:188px;width:2478px;height:2px;background:#e5e5e5"></div><div class="a" style="left:652px;top:190px;width:14px;height:1642px;background:#e7e7e7;border-radius:0 0 0 0;"></div><div class="a" style="left:652px;top:297.3px;width:14px;height:1534.7px;background:#d5d5d5;border-radius:7px 7px 0 0;box-shadow:0 0 0 1.5px #fff;"></div><div class="a" style="left:652px;top:341.3px;width:14px;height:1490.7px;background:#c3c3c3;border-radius:7px 7px 0 0;box-shadow:0 0 0 1.5px #fff;"></div><div class="a" style="left:652px;top:429.3px;width:14px;height:616.0px;background:#b0b0b0;border-radius:7px 7px 7px 7px;box-shadow:0 0 0 1.5px #fff;"></div><div class="a" style="left:652px;top:605.3px;width:14px;height:220.0px;background:#a0a0a0;border-radius:7px 7px 7px 7px;box-shadow:0 0 0 1.5px #fff;"></div><div class="a" style="left:652px;top:649.3px;width:14px;height:132.0px;background:#919191;border-radius:7px 7px 7px 7px;box-shadow:0 0 0 1.5px #fff;"></div><div class="a" style="left:652px;top:1133.3px;width:14px;height:176.0px;background:#b0b0b0;border-radius:7px 7px 7px 7px;box-shadow:0 0 0 1.5px #fff;"></div><div class="a" style="left:652px;top:1309.3px;width:14px;height:132.0px;background:#b0b0b0;border-radius:7px 7px 7px 7px;box-shadow:0 0 0 1.5px #fff;"></div><div class="a" style="left:652px;top:1441.3px;width:14px;height:390.70000000000005px;background:#b0b0b0;border-radius:7px 7px 0 0;box-shadow:0 0 0 1.5px #fff;"></div><div class="a" style="left:652px;top:1529.3px;width:14px;height:302.70000000000005px;background:#a0a0a0;border-radius:7px 7px 0 0;box-shadow:0 0 0 1.5px #fff;"></div><div class="a" style="left:652px;top:1573.3px;width:14px;height:132.0px;background:#919191;border-radius:7px 7px 0 0;box-shadow:0 0 0 1.5px #fff;"></div><div class="a" style="left:652px;top:1705.3px;width:14px;height:88.0px;background:#919191;border-radius:0 0 7px 7px;box-shadow:0 0 0 1.5px #fff;"></div><div class="a" style="left:652px;top:1661.3px;width:14px;height:44px;background:#919191"></div><div class="a" style="left:652px;top:1682.3px;width:14px;height:2px;background:#fff"></div><div class="a" style="left:652px;top:517.3px;width:14px;height:44px;background:#7c7c7c"></div><svg class="a" style="left:652px;top:531.3px" width="14" height="16" viewBox="0 0 14 16"><path d="M4.5 3.5 L9 8 L4.5 12.5" fill="none" stroke="#fff" stroke-width="2" stroke-linecap="round"/></svg><div class="a" style="left:652px;top:869.3px;width:14px;height:44px;background:#7c7c7c"></div><svg class="a" style="left:652px;top:883.3px" width="14" height="16" viewBox="0 0 14 16"><path d="M4.5 3.5 L9 8 L4.5 12.5" fill="none" stroke="#fff" stroke-width="2" stroke-linecap="round"/></svg><div class="a" style="left:546px;top:1177.3px;width:106px;height:44px;background:#ecf3fe"></div><div class="a" style="left:666px;top:1177.3px;width:2358px;height:44px;background:#ecf3fe"></div><div class="a" style="left:652px;top:1177.3px;width:14px;height:44px;background:rgba(60,100,180,0.12)"></div><div class="ln" style="top:209.3px;">25</div><div class="ln" style="top:253.3px;">26</div><div class="code" style="top:253.3px">    <span class="cm">//</span> <span class="mk">MARK: Computed properties</span></div><div class="ln" style="top:297.3px;">27</div><div class="code" style="top:297.3px">    <span class="kw">var</span> <span class="dc">body</span>: <span class="kw">some</span> <span class="st">View</span> {</div><div class="ln" style="top:341.3px;">28</div><div class="code" style="top:341.3px">        <span class="st">NavigationView</span> {</div><div class="ln" style="top:385.3px;">29</div><div class="ln" style="top:429.3px;">30</div><div class="code" style="top:429.3px">            <span class="st">VStack</span> {</div><div class="ln" style="top:473.3px;">31</div><div class="ln" style="top:517.3px;">32</div><div class="code" style="top:517.3px">                <span class="st">List</span>(<span class="pj">$viewModel</span>.<span class="pj">todos</span>) {<span class="fold"><svg style="position:absolute;left:8px;top:14px" width="46" height="12" viewBox="0 0 46 12"><circle cx="6.5" cy="6" r="5" fill="#6f6f6f"/><circle cx="23" cy="6" r="5" fill="#6f6f6f"/><circle cx="39.5" cy="6" r="5" fill="#6f6f6f"/></svg></span>}</div><div class="ln" style="top:561.3px;">47</div><div class="code" style="top:561.3px">                .<span class="sf">searchable</span>(<span class="sf">text</span>: <span class="pj">$searchText</span>)</div><div class="ln" style="top:605.3px;">48</div><div class="code" style="top:605.3px">                .<span class="sf">onChange</span>(<span class="sf">of</span>: <span class="pj">searchText</span>) {</div><div class="ln" style="top:649.3px;">49</div><div class="code" style="top:649.3px">                    <span class="st">Task</span> {</div><div class="ln" style="top:693.3px;">50</div><div class="code" style="top:693.3px">                        <span class="kw">try</span> <span class="kw">await</span> <span class="pj">viewModel</span>.<span class="pj">filterTodos</span>(<span class="pj">on</span>: <span class="pj">searchText</span>)</div><div class="ln" style="top:737.3px;">51</div><div class="code" style="top:737.3px">                    }</div><div class="ln" style="top:781.3px;">52</div><div class="code" style="top:781.3px">                }</div><div class="ln" style="top:825.3px;">53</div><div class="ln" style="top:869.3px;">54</div><div class="code" style="top:869.3px">                <span class="st">HStack</span> {<span class="fold"><svg style="position:absolute;left:8px;top:14px" width="46" height="12" viewBox="0 0 46 12"><circle cx="6.5" cy="6" r="5" fill="#6f6f6f"/><circle cx="23" cy="6" r="5" fill="#6f6f6f"/><circle cx="39.5" cy="6" r="5" fill="#6f6f6f"/></svg></span>}</div><div class="ln" style="top:913.3px;">66</div><div class="code" style="top:913.3px">                .<span class="sf">padding</span>(<span class="num">20</span>)</div><div class="ln" style="top:957.3px;">67</div><div class="ln" style="top:1001.3px;">68</div><div class="code" style="top:1001.3px">            }</div><div class="ln" style="top:1045.3px;">69</div><div class="code" style="top:1045.3px">            .<span class="sf">navigationTitle</span>(<span class="str">&quot;To do&quot;</span>)</div><div class="ln" style="top:1089.3px;">70</div><div class="code" style="top:1089.3px">            <span class="cm">// Show the sheet to add a new item</span></div><div class="ln" style="top:1133.3px;">71</div><div class="code" style="top:1133.3px">            .<span class="sf">sheet</span>(<span class="sf">isPresented</span>: <span class="pj">$presentingNewItemSheet</span>) {</div><div class="ln" style="top:1177.3px;color:#1a1a1a;">72</div><div class="code" style="top:1177.3px">                <span class="st">Text</span>(<span class="str">&quot;Hello, world!&quot;</span>)</div><div class="ln" style="top:1221.3px;">73</div><div class="code" style="top:1221.3px">                    .<span class="sf">presentationDetents</span>([.<span class="sf">fraction</span>(<span class="num">0.15</span>)])</div><div class="ln" style="top:1265.3px;">74</div><div class="code" style="top:1265.3px">            }</div><div class="ln" style="top:1309.3px;">75</div><div class="code" style="top:1309.3px">            <span class="cm">// Add a tool bar to the top of the interface</span></div><div class="ln" style="top:1353.3px;">76</div><div class="code" style="top:1353.3px">            <span class="cm">// NOTE: For a toolbar to appear, it must be</span></div><div class="ln" style="top:1397.3px;">77</div><div class="code" style="top:1397.3px">            <span class="cm">//       inside a NavigationView or NavigationStack.</span></div><div class="ln" style="top:1441.3px;">78</div><div class="code" style="top:1441.3px">            .<span class="sf">toolbar</span> {</div><div class="ln" style="top:1485.3px;">79</div><div class="code" style="top:1485.3px">                <span class="cm">// Add a button to trigger showing the sheet</span></div><div class="ln" style="top:1529.3px;">80</div><div class="code" style="top:1529.3px">                <span class="st">ToolbarItem</span>(<span class="sf">placement</span>: .<span class="sf">automatic</span>) {</div><div class="ln" style="top:1573.3px;">81</div><div class="code" style="top:1573.3px">                    <span class="st">Button</span> {</div><div class="ln" style="top:1617.3px;">82</div><div class="code" style="top:1617.3px">                        <span class="pj">presentingNewItemSheet</span> = <span class="kw">true</span></div><div class="ln" style="top:1661.3px;">83</div><div class="code" style="top:1661.3px">                    } <span class="sf">label</span>: {</div><div class="ln" style="top:1705.3px;">84</div><div class="code" style="top:1705.3px">                        <span class="st">Image</span>(<span class="sf">systemName</span>: <span class="str">&quot;plus&quot;</span>)</div><div class="ln" style="top:1749.3px;">85</div><div class="code" style="top:1749.3px">                    }</div><div class="ln" style="top:1793.3px;">86</div><div class="code" style="top:1793.3px">                }</div><div class="a" style="left:546px;top:190px;width:2478px;height:42px;background:#f2f2f2;border-bottom:2px solid #d9d9d9;box-shadow:0 9px 12px -5px rgba(0,0,0,0.08)"></div><div class="ln" style="top:189px">10</div><div class="code" style="top:190px"><span class="kw">struct</span> <span class="td">LandingView</span>: <span class="st">View</span> {</div><div class="a" style="left:546px;top:1832px;width:2478px;height:2px;background:#e5e5e5"></div><div class="a" style="left:546px;top:1834px;width:2478px;height:54px;background:#fff"></div><svg class="a" style="left:568px;top:1851px" width="30" height="20" viewBox="0 0 30 20"><path d="M3.5 0.5 H21 Q23 0.5 24.5 2.5 L29 8.5 Q30 10 29 11.5 L24.5 17.5 Q23 19.5 21 19.5 H3.5 Q0.5 19.5 0.5 16.5 V3.5 Q0.5 0.5 3.5 0.5 Z" fill="#2f72f0"/></svg><div class="a" style="left:614px;top:1849px;width:2px;height:26px;background:#e0e0e0"></div><svg class="a" style="left:636px;top:1848px" width="22" height="28" viewBox="0 0 22 28"><rect x="1.2" y="1.2" width="5" height="25.6" rx="2" fill="none" stroke="#6e6e6e" stroke-width="2"/><rect x="13.2" y="1.2" width="5" height="25.6" rx="2" fill="none" stroke="#6e6e6e" stroke-width="2"/></svg><svg class="a" style="left:692px;top:1848px" width="28" height="28" viewBox="0 0 28 28"><path d="M1.5 13 L12.5 3 L21 11 M16 12.5 H24.5 V4" fill="none" stroke="#b8b8b8" stroke-width="2"/><rect x="4.5" y="20" width="17" height="5.5" fill="none" stroke="#b8b8b8" stroke-width="2"/></svg><svg class="a" style="left:756px;top:1848px" width="22" height="28" viewBox="0 0 22 28"><path d="M11 1 V17 M4.5 11 L11 17.5 L17.5 11" fill="none" stroke="#b8b8b8" stroke-width="2"/><rect x="2.5" y="21" width="17" height="5.5" fill="none" stroke="#b8b8b8" stroke-width="2"/></svg><svg class="a" style="left:816px;top:1848px" width="22" height="28" viewBox="0 0 22 28"><path d="M11 18 V2 M4.5 8 L11 1.5 L17.5 8" fill="none" stroke="#b8b8b8" stroke-width="2"/><rect x="2.5" y="21" width="17" height="5.5" fill="none" stroke="#b8b8b8" stroke-width="2"/></svg><div class="a" style="left:857px;top:1849px;width:2px;height:26px;background:#e0e0e0"></div><svg class="a" style="left:876px;top:1847px" width="26" height="30" viewBox="0 0 26 30"><g fill="none" stroke="#6e6e6e" stroke-width="2" stroke-linejoin="round"><path d="M10 28 V12 L24 6 V22 Z"/><path d="M6 25 V9 L19 3.5"/><path d="M2 21.5 V6 L14 1.2"/></g></svg><svg class="a" style="left:934px;top:1847px" width="28" height="30" viewBox="0 0 28 30"><g fill="none" stroke="#6e6e6e" stroke-width="2"><circle cx="5.5" cy="5.5" r="4.2"/><circle cx="5.5" cy="24.5" r="4.2"/><circle cx="22.5" cy="15" r="4.2"/><path d="M8.5 8.5 L18.5 13 M8.5 21.5 L18.5 17"/></g></svg><svg class="a" style="left:995px;top:1847px" width="24" height="30" viewBox="0 0 24 30"><g fill="none" stroke="#6e6e6e" stroke-width="2"><rect x="1" y="1" width="22" height="11.5" rx="5.75"/><rect x="1" y="17.5" width="22" height="11.5" rx="5.75"/></g><circle cx="6.75" cy="6.75" r="3.5" fill="#6e6e6e"/><circle cx="17.25" cy="23.25" r="3.5" fill="#6e6e6e"/></svg><svg class="a" style="left:1056px;top:1848px" width="28" height="28" viewBox="0 0 28 28"><path d="M1.5 13 L26 1.5 L14.5 26.5 L12.5 15 Z" fill="none" stroke="#6e6e6e" stroke-width="2" stroke-linejoin="round"/></svg><div class="a" style="left:1098px;top:1849px;width:2px;height:26px;background:#e0e0e0"></div><svg style="position:absolute;left:1119px;top:1849px" width="24" height="24" viewBox="0 0 30 30"><rect x="0.5" y="0.5" width="29" height="29" rx="7" fill="#6e6e6e"/><g stroke="#fff" stroke-width="2.2" stroke-linecap="round" fill="none"><path d="M16 6.5 L10.2 17"/><path d="M8.6 20 L7.6 22"/><path d="M13.8 6.5 L21.8 22"/><path d="M6.5 17.8 H23.5"/></g></svg><div class="t" style="left:1155px;top:1845px;font-size:23.3px;line-height:32px;color:#262626">TodoList</div><div class="t" style="left:2761px;top:1845px;font-size:23.3px;line-height:32px;color:#6e6e6e">Line: 72  Col: 17</div><div class="a" style="left:2955px;top:1849px;width:2px;height:24px;background:#e0e0e0"></div><svg class="a" style="left:2973px;top:1848px" width="27" height="27" viewBox="0 0 27 27"><rect x="1.2" y="1.2" width="24.6" height="24.6" rx="4" fill="none" stroke="#6e6e6e" stroke-width="2"/><rect x="4.5" y="17" width="18" height="5.5" rx="2.5" fill="#6e6e6e"/></svg></div></body></html>
